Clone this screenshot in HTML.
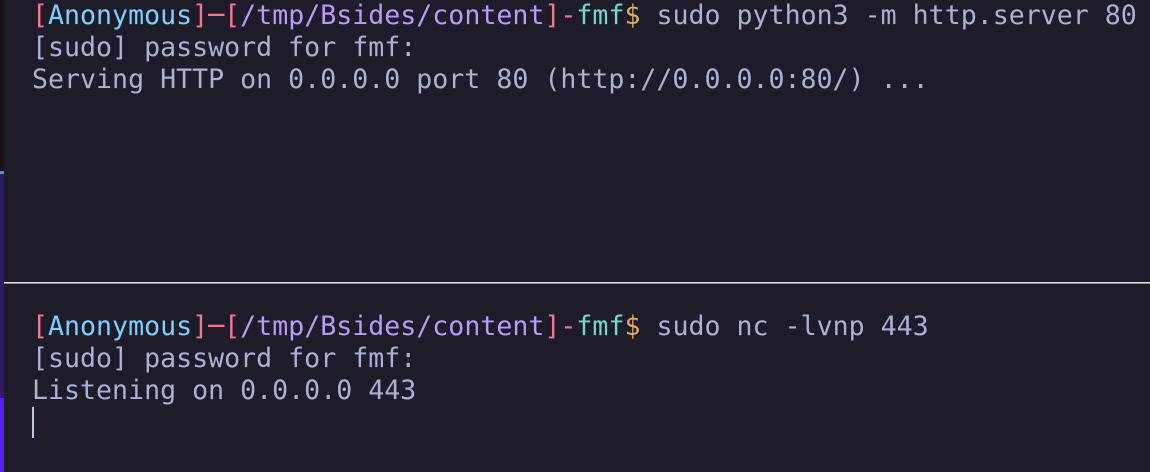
<!DOCTYPE html><html><head><style>
body{margin:0;width:1150px;height:472px;background:#1d1c28;overflow:hidden;position:relative;font-family:"DejaVu Sans Mono",monospace;font-size:26.6px;color:#a9b1d6}
.l{position:absolute;left:32px;white-space:pre;line-height:32px}
.r{color:#f7768e}.c{color:#7dcfff}.p{color:#bb9af7}.t{color:#73daca}.y{color:#e0af68}
</style></head><body>
<div style="position:absolute;left:0;top:0;width:4px;height:171px;background:#1a1216"></div>
<div style="position:absolute;left:0;top:171px;width:4px;height:3px;background:#3aa0b0"></div>
<div style="position:absolute;left:0;top:174px;width:4px;height:298px;background:#2d1a6b"></div>
<div style="position:absolute;left:0;top:398px;width:4px;height:74px;background:#5a1fff"></div>
<div style="position:absolute;left:4px;top:282px;width:1146px;height:1px;background:#e8e8e8"></div>
<div style="position:absolute;left:4px;top:283px;width:1146px;height:1px;background:#3ec040"></div>
<div class="l" style="top:0"><span class="r">[</span><span class="c">Anonymous</span><span class="r">]─[</span><span class="p">/tmp/Bsides/content</span><span class="r">]-</span><span class="t">fmf</span><span class="y">$</span> sudo python3 -m http.server 80</div>
<div class="l" style="top:32px">[sudo] password for fmf:</div>
<div class="l" style="top:64px">Serving HTTP on 0.0.0.0 port 80 (http://0.0.0.0:80/) ...</div>
<div class="l" style="top:311px"><span class="r">[</span><span class="c">Anonymous</span><span class="r">]─[</span><span class="p">/tmp/Bsides/content</span><span class="r">]-</span><span class="t">fmf</span><span class="y">$</span> sudo nc -lvnp 443</div>
<div class="l" style="top:343px">[sudo] password for fmf:</div>
<div class="l" style="top:375px">Listening on 0.0.0.0 443</div>
<div style="position:absolute;left:32px;top:407px;width:2px;height:31px;background:#c0c4e0"></div>
</body></html>
